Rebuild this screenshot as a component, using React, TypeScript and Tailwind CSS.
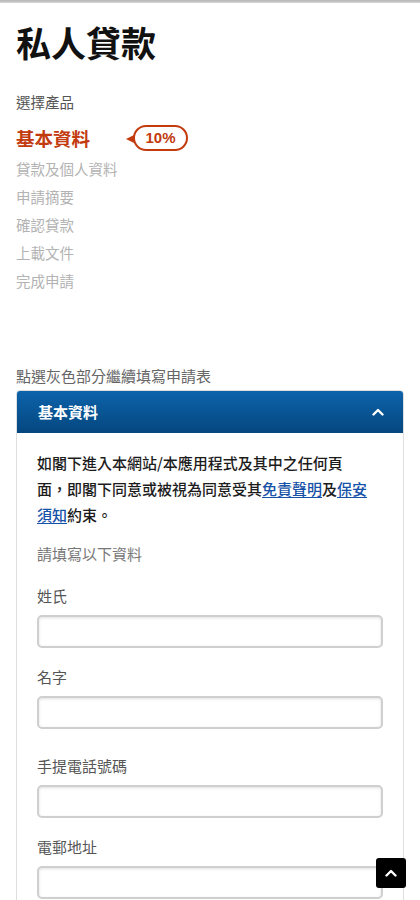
const steps = ['貸款及個人資料', '申請摘要', '確認貸款', '上載文件', '完成申請']

const fields = [
  { label: '姓氏', mt: 'mt-[22px]' },
  { label: '名字', mt: 'mt-[19px]' },
  { label: '手提電話號碼', mt: 'mt-[27px]' },
  { label: '電郵地址', mt: 'mt-[19px]' },
]

const Chevron = ({ className }: { className?: string }) => (
  <svg viewBox="0 0 12 8" className={className} fill="none">
    <polyline points="1.5,6.5 6,2 10.5,6.5" stroke="white" strokeWidth="2.4" strokeLinecap="round" strokeLinejoin="round" />
  </svg>
)

const App = () => {
  return (
    <div className="min-h-[900px] bg-white font-['Noto_Sans_CJK_TC','Noto_Sans',sans-serif]">
      <div className="h-[3px] bg-gradient-to-b from-[#b5b5b5] to-[#d6d6d6]" />
      <div className="px-4">
        <h1 className="mt-[19px] text-[35px] leading-[40px] font-bold text-[#111]">私人貸款</h1>

        <div className="mt-[30px] text-[14.5px] leading-[20px] text-[#555]">選擇產品</div>

        <div className="mt-[12px] flex items-center h-[28px]">
          <span className="text-[18.5px] leading-[28px] font-bold text-[#c23a0e]">基本資料</span>
          <span className="relative ml-[43px] flex items-center justify-center h-[26px] w-[55px] rounded-full border-2 border-[#c23a0e] text-[15px] font-bold text-[#c23a0e] font-['Liberation_Sans',sans-serif]">
            10%
            <svg viewBox="0 0 8 8" className="absolute left-[-9px] top-[8px] w-[8px] h-[8px]">
              <polygon points="0,4 8,0 8,8" fill="#c23a0e" />
            </svg>
          </span>
        </div>

        <ul className="mt-[3px]">
          {steps.map(s => (
            <li key={s} className="text-[14.5px] leading-[28px] text-[#b3b3b3]">
              {s}
            </li>
          ))}
        </ul>

        <div className="mt-[71px] text-[15px] leading-[20px] text-[#666]">點選灰色部分繼續填寫申請表</div>

        <div className="mt-[4px] rounded-[4px] border border-[#dedede]">
          <div className="flex items-center justify-between h-[42px] px-[21px] rounded-t-[3px] bg-gradient-to-b from-[#0d63ab] to-[#05477f]">
            <span className="text-[15px] font-bold text-white">基本資料</span>
            <Chevron className="w-[12px] h-[8px] mr-[-2px]" />
          </div>
          <div className="px-[20px] pt-[17px] pb-[40px]">
            <p className="text-[15px] leading-[26px] font-medium text-[#1c1c1c]">
              如閣下進入本網站/本應用程式及其中之任何頁
              <br />
              面，即閣下同意或被視為同意受其
              <a className="text-[#1652a8] underline underline-offset-2">免責聲明</a>及
              <a className="text-[#1652a8] underline underline-offset-2">保安
              <br />
              須知</a>約束。
            </p>
            <div className="mt-[16px] text-[15px] leading-[20px] text-[#777]">請填寫以下資料</div>
            {fields.map(f => (
              <div key={f.label} className={f.mt}>
                <label className="block text-[15px] leading-[20px] text-[#555]">{f.label}</label>
                <input
                  type="text"
                  className="mt-[9px] block w-full h-[33px] rounded-[5px] border-2 border-[#cfcfcf] bg-white shadow-[inset_0_1px_3px_rgba(0,0,0,0.12)] outline-none"
                />
              </div>
            ))}
          </div>
        </div>
      </div>

      <button className="fixed right-[14px] bottom-[12px] flex items-center justify-center w-[30px] h-[30px] rounded-[3px] bg-black">
        <Chevron className="w-[12px] h-[8px]" />
      </button>
    </div>
  )
}

export default App
